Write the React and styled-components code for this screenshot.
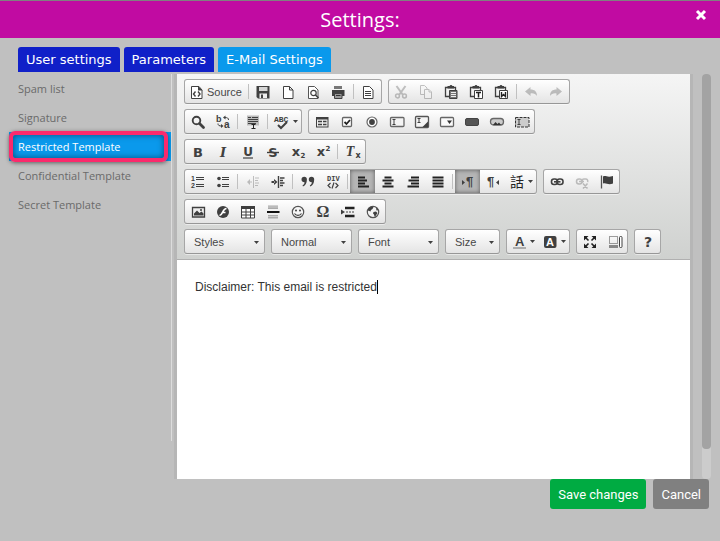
import React, { useState } from "react";
import styled, { createGlobalStyle, css } from "styled-components";

const ink = "#404040";

// 16x16 toolbar drawings
const icons = {
  source: (
    <>
      <path d="M2.500 2.500h7.500l3 3.500v8.500h-10.500z" fill="#fff" stroke={ink} />
      <path d="M9 2v4.500h4.500z" fill={ink} />
      <path d="M6.500 7.500l-2 2.500 2 2.500M9 7.500l2 2.500-2 2.500" fill="none" stroke={ink} strokeWidth="1.400" />
    </>
  ),
  save: (
    <>
      <path d="M1.500 2h13v12.500h-11.500L1.500 13z" fill={ink} />
      <path d="M4 3h8.500v4h-8.500z" fill="#d5d5d5" />
      <path d="M4.500 9.500h7.500v4.500h-7.500z" fill="#eee" />
      <path d="M6 10.500h2v3.500h-2z" fill={ink} />
    </>
  ),
  page: <path d="M3.500 2.500h6l3.500 3.500v8.500h-9.500zM9.500 2.500v3.500h3.500" fill="#fff" stroke={ink} />,
  preview: (
    <>
      <path d="M3.500 2.500h6l3.500 3.500v8.500h-9.500z" fill="#fff" stroke="#555" />
      <circle cx="8.500" cy="9" r="2.700" fill="none" stroke={ink} strokeWidth="1.200" />
      <path d="M10.500 11l3 3" stroke={ink} strokeWidth="1.600" />
    </>
  ),
  print: (
    <>
      <path d="M4 2h8v3h-8z" fill="#777" />
      <path d="M2 6h12.500v6H2z" fill={ink} />
      <path d="M4.500 9.500h7.500v5h-7.500z" fill="#999" stroke={ink} />
      <path d="M6 11.500h4.500" stroke="#333" />
    </>
  ),
  template: (
    <>
      <path d="M3.500 2.500h6l3.500 3.500v8.500h-9.500z" fill="#fff" stroke={ink} />
      <path d="M5 7.500h6M5 9.500h6M5 11.500h6" stroke={ink} />
    </>
  ),
  cut: (
    <g fill="none" stroke={ink} strokeWidth="1.500">
      <path d="M3.500 2l6.500 9M12.500 2l-6.500 9" strokeWidth="2" />
      <circle cx="4.500" cy="12" r="1.900" />
      <circle cx="11.500" cy="12" r="1.900" />
    </g>
  ),
  copy: (
    <g fill="#f5f5f5" stroke={ink}>
      <path d="M2.500 1.500h4l2.500 2.500v6.500h-6.500z" />
      <path d="M6.500 5.500h4.500l2.500 2.500v6.500h-7z" />
      <path d="M11 5.500v2.500h2.500" />
    </g>
  ),
  paste: (
    <>
      <path d="M6 12.500h-3.500v-9h10v4" fill="none" stroke={ink} strokeWidth="1.300" />
      <path d="M4.500 2h2l1-1h1l1 1h1.500v2.500h-6.500z" fill={ink} />
      <path d="M6.500 6.500h7.500v8h-7.500z" fill="#777" stroke={ink} />
      <path d="M8 8.500h5M8 10.500h5M8 12.500h5" stroke="#eee" />
    </>
  ),
  pasteText: (
    <>
      <path d="M6 12.500h-3.500v-9h10v3" fill="none" stroke={ink} strokeWidth="1.300" />
      <path d="M4.500 2h2l1-1h1l1 1h1.500v2.500h-6.500z" fill={ink} />
      <path d="M6.500 6.500h8v8h-8z" fill="#fff" stroke={ink} />
      <path d="M8 8.500h5M10.500 8.500v5" stroke="#222" strokeWidth="1.500" />
    </>
  ),
  pasteWord: (
    <>
      <path d="M6 12.500h-3.500v-9h10v3" fill="none" stroke={ink} strokeWidth="1.300" />
      <path d="M4.500 2h2l1-1h1l1 1h1.500v2.500h-6.500z" fill={ink} />
      <path d="M6.500 6.500h8v8h-8z" fill="#fff" stroke={ink} />
      <path d="M8.500 8v4.500l2-2 2 2v-4.500" fill="none" stroke="#222" strokeWidth="1.400" />
    </>
  ),
  undo: <path d="M2 7.500l5.500-4.500v2.500c4 0 6.500 2 6.500 6.500-1.500-2-3.500-3-6.500-2.500v2.500z" fill={ink} />,
  redo: <path d="M14 7.500l-5.500-4.500v2.500c-4 0-6.500 2-6.500 6.500 1.500-2 3.500-3 6.500-2.500v2.500z" fill={ink} />,
  find: (
    <>
      <circle cx="6.500" cy="6.500" r="3.800" fill="none" stroke={ink} strokeWidth="1.900" />
      <path d="M9.500 9.500l4 4" stroke={ink} strokeWidth="2.800" strokeLinecap="round" />
    </>
  ),
  replace: (
    <>
      <text x="1" y="8" fontSize="9" fontWeight="bold" fill={ink}>b</text>
      <text x="9" y="14" fontSize="10" fontWeight="bold" fill={ink}>a</text>
      <path d="M13.500 6c0-2-1-2.500-4-2.500M3 9.500c0 2 1 2.500 4 2.500" fill="none" stroke={ink} />
      <path d="M8 3.500l2.500-2v4zM8.500 12l-2.500-2v4z" fill={ink} />
    </>
  ),
  selectAll: (
    <>
      <path d="M2 1.500h12v10h-12z" fill="#bbb" />
      <path d="M3 3.500h3M7 3.500h6M3 5.500h10M3 7.500h10M3 9.500h8" stroke={ink} />
      <path d="M6.500 10.500h4M8.500 10.500v4M6.500 14.500h4" stroke="#222" />
    </>
  ),
  spell: (
    <>
      <text x="0" y="8" fontSize="8" fontFamily="Liberation Mono, monospace" fontWeight="bold" fill={ink}>ABC</text>
      <path d="M4 11l3 3 6-6" fill="none" stroke={ink} strokeWidth="2" />
    </>
  ),
  form: (
    <>
      <path d="M2 3h12.500v10.500H2z" fill={ink} />
      <path d="M3 5.500h10.500v7H3z" fill="#eee" />
      <path d="M4 7.500h4M4 10.500h4M9 7.500h3.500M9 10.500h3.500" stroke={ink} strokeWidth="1.500" />
    </>
  ),
  checkbox: (
    <>
      <rect x="3.500" y="3.500" width="9" height="9" rx="1" fill="#fff" stroke="#666" strokeWidth="1.300" />
      <path d="M5.500 8l2 2 3.500-4" fill="none" stroke="#222" strokeWidth="1.800" />
    </>
  ),
  radio: (
    <>
      <circle cx="8" cy="8" r="5" fill="#fff" stroke="#666" strokeWidth="1.200" />
      <circle cx="8" cy="8" r="2.900" fill={ink} />
    </>
  ),
  textField: (
    <>
      <rect x="1.500" y="3.500" width="13.500" height="9" rx="1" fill="#f4f4f4" stroke="#666" strokeWidth="1.300" />
      <path d="M3.500 5.500h3M5 5.500v5M3.500 10.500h3" stroke={ink} />
    </>
  ),
  textarea: (
    <>
      <rect x="1.500" y="2.500" width="13" height="11" rx="1" fill="#f4f4f4" stroke="#555" strokeWidth="1.300" />
      <path d="M3.500 4.500h3M5 4.500v4M3.500 8.500h3" stroke={ink} />
      <path d="M14 7.500v5.500H8.500z" fill={ink} />
    </>
  ),
  select: (
    <>
      <rect x="1.500" y="3.500" width="13" height="9" rx="1" fill="#fafafa" stroke="#666" strokeWidth="1.300" />
      <path d="M8 6.500h5l-2.500 3.500z" fill="#333" />
    </>
  ),
  button: <rect x="1.500" y="4.500" width="13" height="7" rx="1.500" fill="#555" stroke="#444" />,
  imageButton: (
    <>
      <rect x="1.500" y="4.500" width="13" height="6.500" rx="3" fill="#ccc" stroke="#666" strokeWidth="1.300" />
      <path d="M4 11l2.500-3 2 2 1.500-1.500 2 2.500z" fill="#333" />
    </>
  ),
  hidden: (
    <>
      <rect x="1.500" y="3.500" width="13.500" height="9.500" fill="#ccc" stroke="#333" strokeDasharray="3 1" />
      <path d="M3.500 5.500h3M5 5.500v5M3.500 10.500h3" stroke={ink} />
    </>
  ),
  numbered: (
    <>
      <text x="1" y="7" fontSize="7" fontWeight="bold" fill={ink}>1</text>
      <text x="1" y="14" fontSize="7" fontWeight="bold" fill={ink}>2</text>
      <path d="M6 3.500h8M6 5.500h8M6 10.500h8M6 12.500h8" stroke={ink} />
    </>
  ),
  bulleted: (
    <>
      <circle cx="4" cy="4.500" r="1.800" fill={ink} />
      <circle cx="4" cy="11.500" r="1.800" fill={ink} />
      <path d="M7 3.500h7M7 5.500h7M7 10.500h7M7 12.500h7" stroke={ink} />
    </>
  ),
  outdent: (
    <>
      <path d="M8.500 2v12M10 4h4M10 6.500h3M10 9h4M10 11.500h3" stroke={ink} />
      <path d="M2 8l3-3v6zM5 7.500h2v1h-2z" fill={ink} />
    </>
  ),
  indent: (
    <>
      <path d="M8.500 2v12M10 4h4.500M10 6.500h3M10 9h4.500M10 11.500h3" stroke={ink} strokeWidth="1.400" />
      <path d="M7.500 8l-3.500-3v6zM1.500 7h3v2h-3z" fill={ink} />
    </>
  ),
  quote: (
    <path d="M1.500 5.500a2.700 2.700 0 0 1 5.400 0c0 3.500-1.500 6-3.900 7l-.5-1c1.500-1 2-2 2-3.300-1.800 0-3-1-3-2.700zM8.800 5.500a2.700 2.700 0 0 1 5.400 0c0 3.500-1.500 6-3.900 7l-.5-1c1.500-1 2-2 2-3.300-1.800 0-3-1-3-2.700z" fill={ink} />
  ),
  div: (
    <>
      <text x="2" y="7" fontSize="7" fontFamily="Liberation Mono, monospace" fontWeight="bold" fill={ink}>DIV</text>
      <path d="M5.500 9l-2.500 2.500 2.500 2.500M10.500 9l2.500 2.500-2.500 2.500M9 8.500l-2 6" fill="none" stroke={ink} strokeWidth="1.200" />
    </>
  ),
  left: <path d="M3 3.500h7M3 6.500h9M3 9.500h7M3 12.500h11" stroke="#222" strokeWidth="2" />,
  center: <path d="M4.500 3.500h7M2.500 6.500h11M4.500 9.500h7M2.500 12.500h11" stroke="#222" strokeWidth="1.800" />,
  right: <path d="M6 3.500h8M3.500 6.500h10.500M6 9.500h8M2.500 12.500h11.500" stroke="#222" strokeWidth="1.800" />,
  justify: <path d="M2.500 3.500h11M2.500 6.500h11M2.500 9.500h11M2.500 12.500h11" stroke="#222" strokeWidth="1.800" />,
  link: (
    <g fill="none" stroke={ink} strokeWidth="1.600">
      <rect x="2.500" y="5" width="6" height="5.500" rx="2.500" />
      <rect x="8" y="5" width="6" height="5.500" rx="2.500" />
      <path d="M5 7.800h6.500" />
    </g>
  ),
  unlink: (
    <g fill="none" stroke={ink} strokeWidth="1.500">
      <rect x="2.500" y="5" width="5.500" height="5" rx="2.500" />
      <path d="M8 9V7a2 2 0 0 1 2-2h1.500a2 2 0 0 1 2 3M5 7.500h5M9 9.500l4.500 5M13.500 9.500l-4.500 5" />
    </g>
  ),
  flag: (
    <>
      <path d="M2.500 1.500v13" stroke="#555" strokeWidth="1.300" />
      <path d="M4 2.500c3-1.500 4 1.500 10-.5v7.500c-5 2-6.500-1-10 0z" fill={ink} />
    </>
  ),
  image: (
    <>
      <path d="M2.500 3.500h12v9.500h-12z" fill="#eee" stroke={ink} strokeWidth="1.300" />
      <path d="M4 11.500v-2l3-3 2.500 2.500 2-1.500 2 2v2z" fill={ink} />
      <circle cx="11" cy="6" r="1" fill={ink} />
    </>
  ),
  flash: (
    <>
      <circle cx="8" cy="8" r="6" fill={ink} />
      <path d="M11.500 4.500c-4 0-3.500 6.500-7 7M7 8.500h3.500" fill="none" stroke="#fff" strokeWidth="1.700" />
    </>
  ),
  table: (
    <>
      <path d="M1.500 2.500h13v11.500h-13z" fill="#fff" stroke={ink} />
      <path d="M1 2h14v3H1z" fill={ink} />
      <path d="M1.500 8h13M1.500 11h13M6 4v10M10.500 4v10" stroke={ink} />
    </>
  ),
  rule: (
    <>
      <path d="M3 1.500h10v3.500H3zM3 11h10v3.500H3z" fill="#aaa" />
      <path d="M3 3h10M3 12.500h10" stroke="#ccc" />
      <path d="M2 8h12.500" stroke="#111" strokeWidth="2" />
    </>
  ),
  smiley: (
    <>
      <circle cx="8" cy="8" r="5.700" fill="#f7f7f7" stroke="#555" strokeWidth="1.200" />
      <circle cx="6" cy="6.500" r="1" fill={ink} />
      <circle cx="10" cy="6.500" r="1" fill={ink} />
      <path d="M4.500 9.500c1.500 2.500 5.500 2.500 7 0" fill="none" stroke={ink} strokeWidth="1.200" />
    </>
  ),
  pageBreak: (
    <>
      <path d="M1 5.500l4 2.500-4 2.500z" fill={ink} />
      <path d="M5 4h9.500M5 12h9.500" stroke="#222" strokeWidth="2.400" />
      <path d="M6 8h9" stroke={ink} strokeWidth="1.200" strokeDasharray="2 1" />
    </>
  ),
  iframe: (
    <>
      <circle cx="8" cy="8" r="5.700" fill="#f4f4f4" stroke="#555" strokeWidth="1.200" />
      <path d="M3 5l3-2.500 2.500.5-1 2-1.500 1-.5 1.500-2.500-1zM8.500 8l2.500-.5 1.500 1.500-2 3-1 .5-.5-2-1-1zM11 3.500l2.500 2.500-2 .5z" fill={ink} />
    </>
  ),
  maximize: (
    <>
      <path d="M2 2h4.500l-4.500 4.500zM14 2v4.500l-4.500-4.500zM2 14v-4.500l4.500 4.500zM14 14h-4.500l4.500-4.500z" fill="#222" />
      <path d="M3 3l3.500 3.500M13 3l-3.500 3.500M3 13l3.500-3.500M13 13l-3.500-3.500" stroke="#222" strokeWidth="1.600" />
    </>
  ),
  blocks: (
    <>
      <path d="M2.500 2.500h8v7h-8z" fill="none" stroke={ink} strokeDasharray="1 1" />
      <path d="M2 11h9v3H2z" fill="#888" />
      <rect x="12.500" y="2.500" width="2.500" height="11" rx="1" fill="#fff" stroke={ink} />
    </>
  ),
  bgColor: (
    <>
      <rect x="2" y="2" width="12.500" height="12" rx="2" fill={ink} />
      <text x="4" y="12" fontSize="11" fontWeight="bold" fill="#fff">A</text>
    </>
  ),
  textColor: (
    <>
      <text x="4" y="12" fontSize="13" fontWeight="bold" fill={ink}>A</text>
      <path d="M2 14h13" stroke="#999" strokeWidth="1.500" />
    </>
  ),
  ltr: (
    <>
      <path d="M2 6l3 2.500-3 2.500z" fill={ink} />
      <text x="6" y="12" fontSize="13" fontWeight="bold" fill={ink}>¶</text>
    </>
  ),
  rtl: (
    <>
      <text x="2" y="12" fontSize="13" fontWeight="bold" fill={ink}>¶</text>
      <path d="M14 6l-3 2.500 3 2.500z" fill={ink} />
    </>
  ),
};

const bold = (text, extra) => (
  <text x="8" y="13" textAnchor="middle" fontFamily="DejaVu Sans, sans-serif" fontSize="13" fontWeight="bold" fill={ink} {...extra}>
    {text}
  </text>
);

icons.bold = bold("B");
icons.italic = bold("I", { fontStyle: "italic", fontFamily: "DejaVu Serif, serif" });
icons.underline = (
  <>
    {bold("U", { y: 12, fontSize: 12 })}
    <path d="M3 14h10" stroke={ink} strokeWidth="1.200" />
  </>
);
icons.strike = (
  <>
    {bold("S")}
    <path d="M2 8.500h12" stroke={ink} strokeWidth="1.400" />
  </>
);
icons.sub = (
  <>
    {bold("x", { x: 6, y: 12 })}
    {bold("2", { x: 13, y: 14, fontSize: 7 })}
  </>
);
icons.sup = (
  <>
    {bold("x", { x: 6, y: 12 })}
    {bold("2", { x: 13, y: 7, fontSize: 7 })}
  </>
);
icons.clear = (
  <>
    {bold("T", { x: 5, y: 12, fontStyle: "italic", fontFamily: "Liberation Serif, serif", fontSize: 14 })}
    {bold("x", { x: 13, y: 14, fontSize: 8 })}
  </>
);
icons.omega = bold("Ω", { fontFamily: "Liberation Serif, serif", fontSize: 16 });
icons.about = bold("?", { fontSize: 14 });
icons.language = (
  <text x="1" y="13" fontFamily="Noto Sans CJK TC, sans-serif" fontSize="14" fill="#222">話</text>
);

// each entry: [icon, label, flag], "|" is a separator
const rows = [
  [
    [["source", "Source", "text"], "|", ["save", "Save"], ["page", "New Page"], ["preview", "Preview"], ["print", "Print"], "|", ["template", "Templates"]],
    [["cut", "Cut", "off"], ["copy", "Copy", "off"], ["paste", "Paste"], ["pasteText", "Paste as plain text"], ["pasteWord", "Paste from Word"], "|", ["undo", "Undo", "off"], ["redo", "Redo", "off"]],
  ],
  [
    [["find", "Find"], ["replace", "Replace"], "|", ["selectAll", "Select All"], "|", ["spell", "Spell Check", "menu"]],
    [["form", "Form"], ["checkbox", "Checkbox"], ["radio", "Radio Button"], ["textField", "Text Field"], ["textarea", "Textarea"], ["select", "Selection Field"], ["button", "Button"], ["imageButton", "Image Button"], ["hidden", "Hidden Field"]],
  ],
  [
    [["bold", "Bold"], ["italic", "Italic"], ["underline", "Underline"], ["strike", "Strikethrough"], ["sub", "Subscript"], ["sup", "Superscript"], "|", ["clear", "Remove Format"]],
  ],
  [
    [["numbered", "Numbered List"], ["bulleted", "Bulleted List"], "|", ["outdent", "Decrease Indent", "off"], ["indent", "Increase Indent"], "|", ["quote", "Block Quote"], ["div", "Div Container"], "|", ["left", "Align Left", "on"], ["center", "Center"], ["right", "Align Right"], ["justify", "Justify"], "|", ["ltr", "Left to Right", "on"], ["rtl", "Right to Left"], ["language", "Language", "menu"]],
    [["link", "Link"], ["unlink", "Unlink", "off"], ["flag", "Anchor"]],
  ],
  [
    [["image", "Image"], ["flash", "Flash"], ["table", "Table"], ["rule", "Horizontal Line"], ["smiley", "Smiley"], ["omega", "Special Character"], ["pageBreak", "Page Break"], ["iframe", "IFrame"]],
  ],
];

const colorGroups = [
  [["textColor", "Text Color", "menu"], ["bgColor", "Background Color", "menu"]],
  [["maximize", "Maximize"], ["blocks", "Show Blocks"]],
  [["about", "About"]],
];

const tabs = ["User settings", "Parameters", "E-Mail Settings"];
const sections = ["Spam list", "Signature", "Restricted Template", "Confidential Template", "Secret Template"];

function Arrow() {
  return (
    <svg width="5" height="3" viewBox="0 0 5 3" aria-hidden="true">
      <path d="M0 0h5L2.500 3z" fill={ink} />
    </svg>
  );
}

function Tools({ items }) {
  return (
    <Group>
      {items.map((item, i) => {
        if (item === "|") return <Separator key={i} />;
        const [icon, label, flag] = item;
        return (
          <Tool key={icon} type="button" aria-label={label} disabled={flag === "off"} $on={flag === "on"} $menu={flag === "menu"}>
            <svg width="16" height="16" viewBox="0 0 16 16" aria-hidden="true">{icons[icon]}</svg>
            {flag === "text" && <span>{label}</span>}
            {flag === "menu" && <Arrow />}
          </Tool>
        );
      })}
    </Group>
  );
}

function Combo({ label, small }) {
  return (
    <ComboBox $small={small}>
      <select aria-label={label}>
        <option>{label}</option>
      </select>
      <Arrow />
    </ComboBox>
  );
}

export default function App() {
  const [tab, setTab] = useState("E-Mail Settings");
  const [section, setSection] = useState("Restricted Template");
  const [text, setText] = useState("Disclaimer: This email is restricted");

  return (
    <>
      <GlobalStyle />
      <Header>
        <h1>Settings:</h1>
        <Close type="button" aria-label="Close">
          <svg width="12" height="12" viewBox="0 0 12 12" aria-hidden="true">
            <path d="M2 2l8 8M10 2l-8 8" stroke="#fff" strokeWidth="3" />
          </svg>
        </Close>
      </Header>
      <Tabs>
        {tabs.map((name) => (
          <Tab key={name} type="button" $active={name === tab} onClick={() => setTab(name)}>
            {name}
          </Tab>
        ))}
      </Tabs>
      <Content>
        <Sidebar>
          {sections.map((name) => (
            <SideLink key={name} href="#" $active={name === section} onClick={() => setSection(name)}>
              {name}
            </SideLink>
          ))}
        </Sidebar>
        <Editor>
          <Toolbar>
            {rows.map((groups, i) => (
              <Row key={i}>
                {groups.map((items, j) => (
                  <Tools key={j} items={items} />
                ))}
              </Row>
            ))}
            <Row>
              <Combo label="Styles" />
              <Combo label="Normal" />
              <Combo label="Font" />
              <Combo label="Size" small />
              {colorGroups.map((items, i) => (
                <Tools key={i} items={items} />
              ))}
            </Row>
          </Toolbar>
          <Document>
            <textarea aria-label="Template text" rows="1" value={text} onChange={(e) => setText(e.target.value)} />
            <Caret />
          </Document>
        </Editor>
        <Scrollbar>
          <Thumb />
        </Scrollbar>
      </Content>
      <Footer>
        <Action type="button" $color="#00ab42">Save changes</Action>
        <Action type="button" $color="#808080">Cancel</Action>
      </Footer>
    </>
  );
}

const GlobalStyle = createGlobalStyle`
  * {
    box-sizing: border-box;
  }
  body {
    margin: 0;
    background: #c0c0c0;
    font-family: "Liberation Sans", Arial, sans-serif;
  }
  button {
    font: inherit;
    border: 0;
    padding: 0;
    cursor: pointer;
  }
`;

const Header = styled.header`
  position: relative;
  display: flex;
  justify-content: center;
  align-items: center;
  height: 38px;
  border-top: 1px solid #808080;
  background: #c10ba2;
  h1 {
    margin: 0;
    color: white;
    font: 400 20px/28px "Open Sans", "Noto Sans", sans-serif;
  }
`;

const Close = styled.button`
  position: absolute;
  top: 8px;
  right: 13px;
  display: flex;
  background: none;
`;

const Tabs = styled.div`
  display: flex;
  gap: 4px;
  padding: 9px 18px 2px;
`;

const Tab = styled.button`
  height: 25px;
  padding: 0 8px;
  border-radius: 3px 3px 0 0;
  background: ${(p) => (p.$active ? "#0a99ec" : "#1020c8")};
  color: white;
  font: 500 13px/25px Verdana, "DejaVu Sans", sans-serif;
`;

const Content = styled.main`
  display: flex;
  align-items: flex-start;
  padding: 0 9px;
`;

const Sidebar = styled.nav`
  width: 163px;
  min-height: 367px;
  margin-right: 2px;
  border-right: 1px solid #dcdcdc;
  flex-shrink: 0;
`;

const SideLink = styled.a`
  position: relative;
  display: block;
  padding: 0 9px;
  color: #6a6a6a;
  font: 11px/29px "Open Sans", "Noto Sans", sans-serif;
  text-decoration: none;
  ${(p) =>
    p.$active &&
    css`
      background: #0a99ec;
      color: white;
      &::after {
        content: "";
        position: absolute;
        inset: -1px 3px -1px 0;
        border: 4px solid #fb2a6c;
        border-radius: 6px;
        box-shadow: 0 1px 4px rgba(0, 0, 0, 0.5), inset 0 0 6px rgba(0, 0, 0, 0.5);
      }
    `}
`;

const Editor = styled.section`
  flex: 1;
  min-width: 0;
  border: solid #b6b6b6;
  border-width: 0 3px;
  background: white;
`;

const Toolbar = styled.div`
  display: flex;
  flex-direction: column;
  gap: 5px;
  padding: 5px 7px;
  border-bottom: 1px solid #b0b0b0;
  background: linear-gradient(#f5f5f5, #cfd1cf);
`;

const Row = styled.div`
  display: flex;
  gap: 6px;
`;

const box = css`
  border: 1px solid #a6a6a6;
  border-bottom-color: #979797;
  border-radius: 3px;
  background: linear-gradient(#ffffff, #e4e4e4);
  box-shadow: 0 1px 0 rgba(255, 255, 255, 0.5);
`;

const Group = styled.div`
  ${box}
  display: flex;
  height: 25px;
`;

const Tool = styled.button`
  display: flex;
  align-items: center;
  justify-content: center;
  gap: ${(p) => (p.$menu ? "3px" : "2px")};
  min-width: ${(p) => (p.$menu ? "31px" : "25px")};
  padding: ${(p) => (p.$menu ? "0 3px" : "0 4px")};
  background: ${(p) => (p.$on ? "#b5b5b5" : "none")};
  box-shadow: ${(p) => (p.$on ? "inset 0 0 4px rgba(0, 0, 0, 0.5)" : "none")};
  color: #474747;
  font-size: 11px;
  svg {
    flex-shrink: 0;
    overflow: visible;
  }
  &:disabled svg {
    opacity: 0.3;
  }
`;

const Separator = styled.span`
  width: 1px;
  margin: 4px 2px;
  background: #c0c0c0;
`;

const ComboBox = styled.div`
  ${box}
  position: relative;
  width: ${(p) => (p.$small ? "55px" : "81px")};
  height: 25px;
  select {
    appearance: none;
    width: 100%;
    height: 100%;
    padding: 0 9px;
    border: 0;
    background: none;
    color: #474747;
    font: 11px "Liberation Sans", Arial, sans-serif;
  }
  svg {
    position: absolute;
    top: 11px;
    right: 5px;
    pointer-events: none;
  }
`;

const Document = styled.div`
  display: flex;
  min-height: 219px;
  padding: 20px 18px;
  textarea {
    field-sizing: content;
    height: 14px;
    padding: 0;
    border: 0;
    outline: 0;
    resize: none;
    overflow: hidden;
    background: none;
    color: #333;
    font: 12px/14px "Liberation Sans", Arial, sans-serif;
  }
`;

const Caret = styled.span`
  width: 1px;
  height: 14px;
  background: black;
`;

const Scrollbar = styled.div`
  align-self: stretch;
  width: 9px;
  margin-left: 9px;
  border-radius: 4px;
  background: #cccccc;
`;

const Thumb = styled.div`
  height: 375px;
  border-radius: 4px;
  background: #a3a3a3;
`;

const Footer = styled.footer`
  display: flex;
  justify-content: flex-end;
  gap: 7px;
  padding: 0 11px 32px;
`;

const Action = styled.button`
  height: 30px;
  padding: 0 8px;
  border-radius: 3px;
  background: ${(p) => p.$color};
  color: white;
  font: 400 13px Roboto, sans-serif;
`;
